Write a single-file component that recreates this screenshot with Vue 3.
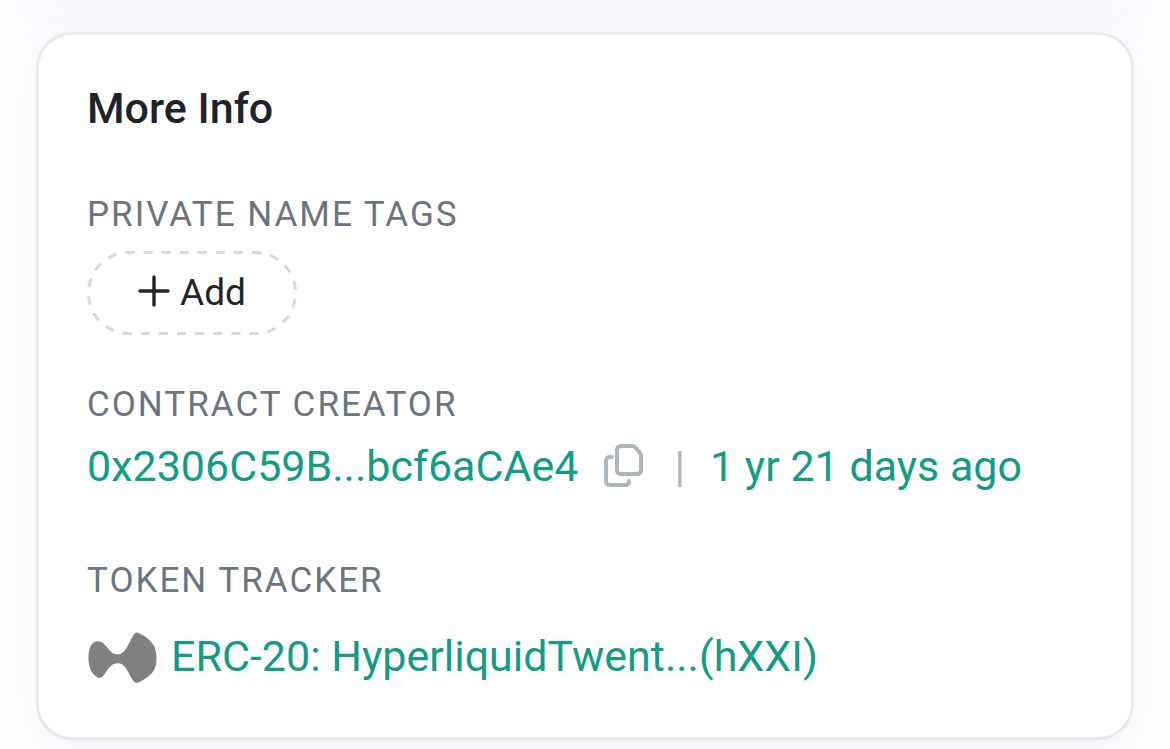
<script setup>
const address = '0x2306C59B...bcf6aCAe4'
</script>

<template>
  <main class="page">
    <div class="previous" aria-hidden="true"></div>
    <section class="card">
      <h2>More Info</h2>
      <div class="group">
        <h3>PRIVATE NAME TAGS</h3>
        <button class="add" type="button">
          <svg class="outline" viewBox="0 0 210 84" preserveAspectRatio="none" aria-hidden="true"><rect x="1.5" y="1.5" width="207" height="81" rx="40" pathLength="504" /></svg>
          <svg class="plus" viewBox="0 2 32 32" aria-hidden="true"><path d="M16 2V30M2 16H30" /></svg>
          <span>Add</span>
        </button>
      </div>
      <div class="group">
        <h3>CONTRACT CREATOR</h3>
        <div class="row creator">
          <a href="#">{{ address }}</a>
          <button class="copy" type="button" aria-label="Copy address">
            <svg viewBox="0 0 40 44" aria-hidden="true">
              <path d="M17 2H29Q30 2 31 3L36 9Q37 10 37 11V26Q37 30 33 30H17Q13 30 13 26V6Q13 2 17 2ZM8 13H6Q2 13 2 17V37Q2 41 6 41H21Q25 41 25 37" />
            </svg>
          </button>
          <span class="divider">|</span>
          <a href="#">1 yr 21 days ago</a>
        </div>
      </div>
      <div class="group tracker">
        <h3>TOKEN TRACKER</h3>
        <div class="row token">
          <svg class="logo" viewBox="-1 -2 70 52" aria-hidden="true"><path d="M9.5 9.2C19 9.2 20 22.3 29.7 22.3C39 22.3 42 6 47 1.2Q48.6 .1 50.5 1C57 3.7 61 7 64 11Q68.5 16 68.5 26Q68.5 36 64 41C60 45 55 48.5 50.5 50.5Q48.6 51.6 46.5 50C41 45 39 31.3 29.7 31.3C21 31.3 19 41 14 45Q11.7 46.8 9.3 45.3C3 42 .5 34 .5 26C.5 16 3.5 9.2 9.5 9.2Z" /></svg>
          <a href="#">ERC-20: HyperliquidTwent...(hXXI)</a>
        </div>
      </div>
    </section>
  </main>
</template>

<style>
body { margin: 0; background: #fcfdfe; }
</style>

<style scoped>
.page { min-height: 100vh; box-sizing: border-box; overflow: hidden; padding: 0 36px 9px; font-family: Roboto, sans-serif; color: #212529; }
.previous { height: 0; margin-bottom: 32px; box-shadow: 0 0 60px 16px #edeff5; }
.card { position: relative; box-sizing: border-box; padding: 48px 48px 54px; border: 3px solid #e9eaed; border-radius: 36px; background: #fff; box-shadow: 0 12px 48px #f1f3f7; }
h2 { margin: 0 0 60px; font-size: 43px; line-height: 50px; font-weight: 500; color: #212228; }
h3 { margin: 0; font-size: 35px; line-height: 44px; font-weight: 400; letter-spacing: 2px; color: #6c757d; }
.group + .group { margin-top: 48px; }
.group + .tracker { margin-top: 66px; }
.add { position: relative; display: flex; align-items: center; gap: 10px; height: 84px; margin-top: 14px; padding: 0 51px; border: 0; background: transparent; color: #212529; font: 37px/44px Roboto, sans-serif; }
.outline { position: absolute; inset: 0; width: 100%; height: 100%; fill: none; stroke: #d8d9db; stroke-width: 3; stroke-dasharray: 9 9; stroke-dashoffset: 3; }
.plus { width: 32px; height: 32px; overflow: visible; fill: none; stroke: currentColor; stroke-width: 3.4; stroke-linecap: round; }
.row { display: flex; align-items: center; white-space: nowrap; font-size: 43px; line-height: 54px; }
.creator { margin-top: 12px; }
.token { margin-top: 26px; gap: 14px; }
a { color: #139c83; text-decoration: none; }
.copy { width: 40px; height: 44px; margin-left: 26px; padding: 0; border: 0; background: transparent; }
.copy svg { display: block; width: 100%; height: 100%; fill: none; stroke: #adb5bd; stroke-width: 4; stroke-linejoin: round; stroke-linecap: round; }
.divider { margin: 0 25px 0 30px; color: #adb5bd; }
.logo { width: 70px; height: 52px; overflow: visible; fill: #808080; }
</style>
